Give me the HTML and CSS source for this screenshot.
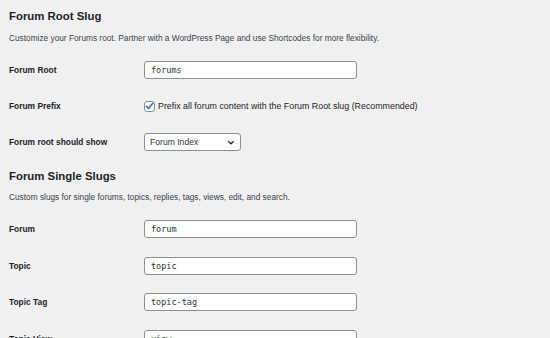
FILE: index.html
```html
<!DOCTYPE html>
<html lang="en">
<head>
<title>Forum Settings</title>
<meta charset="utf-8">
<link rel="stylesheet" href="styles.css">
</head>
<body>

<section class="slugs slugs_root">
  <h2>Forum Root Slug</h2>
  <p class="intro">Customize your Forums root. Partner with a WordPress Page and use Shortcodes for more flexibility.</p>
  <div class="form_row">
    <label class="label">Forum Root</label>
    <input class="slug_input" type="text" value="forums">
  </div>
  <div class="form_row">
    <span class="label">Forum Prefix</span>
    <label class="check">
      <span class="box">
        <svg width="9" height="8" viewBox="0 0 9 8"><path d="M1.2 4.2 L3.5 6.4 L7.8 1.2" fill="none" stroke="#2271b1" stroke-width="1.5" stroke-linecap="round" stroke-linejoin="round"/></svg>
      </span>
      Prefix all forum content with the Forum Root slug (Recommended)
    </label>
  </div>
  <div class="form_row">
    <span class="label">Forum root should show</span>
    <div class="select">
      <span>Forum Index</span>
      <svg width="8" height="5" viewBox="0 0 8 5"><path d="M1.2 1.1 L4 3.8 L6.8 1.1" fill="none" stroke="#1d2327" stroke-width="1.3"/></svg>
    </div>
  </div>
</section>

<section class="slugs slugs_single">
  <h2>Forum Single Slugs</h2>
  <p class="intro">Custom slugs for single forums, topics, replies, tags, views, edit, and search.</p>
  <div class="form_row">
    <label class="label">Forum</label>
    <input class="slug_input" type="text" value="forum">
  </div>
  <div class="form_row">
    <label class="label">Topic</label>
    <input class="slug_input" type="text" value="topic">
  </div>
  <div class="form_row">
    <label class="label">Topic Tag</label>
    <input class="slug_input" type="text" value="topic-tag">
  </div>
  <div class="form_row">
    <label class="label">Topic View</label>
    <input class="slug_input" type="text" value="view">
  </div>
</section>

</body>
</html>
```
FILE: styles.css
```css
html, body {
  margin: 0;
  background: #f0f0f1;
  overflow: hidden;
}
body {
  font-family: "Liberation Sans", Arial, sans-serif;
  color: #1d2327;
  padding: 0 9px;
  height: 338px;
}
h2 {
  font-size: 11.4px;
  font-weight: bold;
  line-height: 14px;
  margin: 0;
}
.slugs_root h2 {
  padding-top: 9px;
}
.slugs_single h2 {
  margin-top: 9px;
}
.intro {
  font-size: 8.3px;
  line-height: 12px;
  color: #3c434a;
  margin: 9px 0 8px;
}
.slugs_single .intro {
  margin-top: 8px;
}
.form_row {
  display: flex;
  align-items: center;
  height: 36px;
}
.slugs_single .form_row {
  height: 36.5px;
}
.label {
  width: 135px;
  flex: none;
  font-size: 8.4px;
  font-weight: bold;
}
.slug_input {
  box-sizing: border-box;
  width: 213px;
  height: 18px;
  margin: 0;
  padding: 0 6px;
  border: 1px solid #8c8f94;
  border-radius: 3px;
  background: #fff;
  font-family: "DejaVu Sans Mono", monospace;
  font-size: 8.5px;
  color: #2c3338;
  outline: none;
}
.check {
  display: flex;
  align-items: center;
  gap: 3px;
  font-size: 8.85px;
  color: #1d2327;
}
.box {
  box-sizing: border-box;
  width: 11px;
  height: 11px;
  border: 1px solid #8c8f94;
  border-radius: 3px;
  background: #fff;
  display: flex;
  align-items: center;
  justify-content: center;
}
.select {
  box-sizing: border-box;
  width: 97px;
  height: 18px;
  display: flex;
  align-items: center;
  justify-content: space-between;
  padding: 0 5px 0 5px;
  border: 1px solid #8c8f94;
  border-radius: 3px;
  background: #fff;
  font-size: 8.6px;
  color: #2c3338;
}
```
